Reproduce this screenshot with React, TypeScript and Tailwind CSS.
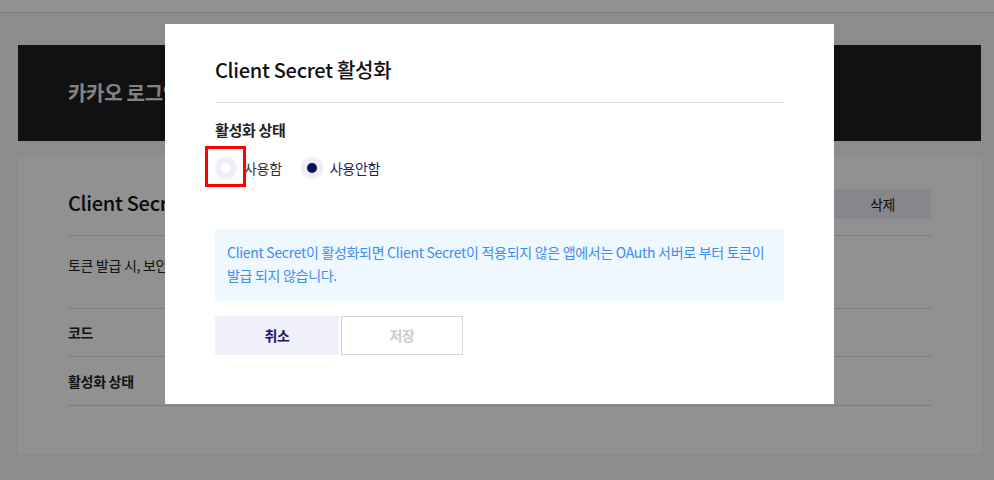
import React from "react";

const font = { fontFamily: '"Noto Sans CJK KR", "Noto Sans", sans-serif' };

function Radio({ checked, label }: { checked: boolean; label: string }) {
  return (
    <label className="flex items-center">
      <span className="flex h-[22px] w-[22px] items-center justify-center rounded-full bg-[#eeeef8]">
        <span className={`h-[10px] w-[10px] rounded-full ${checked ? "bg-[#0b1157]" : "bg-white"}`} />
      </span>
      <span className={`ml-[7px] text-[14px] leading-[22px] ${checked ? "text-[#1f1f5f]" : "text-[#333]"}`}>{label}</span>
    </label>
  );
}

export default function App() {
  return (
    <div style={font} className="relative h-[480px] w-[994px] overflow-hidden bg-[#f7f7f7] tracking-[-0.3px]">
      <div className="h-[13px] border-b border-[#d8d8d8] bg-white" />
      <div className="pl-[18px] pr-[13px] pt-[32px]">
        <div className="flex h-[96px] items-center bg-[#1f1f1f] px-[50px]">
          <span className="text-[20px] font-bold text-[#e6e6e6]">카카오 로그인</span>
        </div>
        <div className="mt-[16px] h-[297px] bg-white px-[50px] pt-[31px]">
          <div className="flex h-[30px] items-center justify-between">
            <span className="text-[20px] font-medium leading-[26px] text-[#111]">Client Secret</span>
            <span className="mt-[2px] flex h-[30px] w-[97px] items-center justify-center bg-[#eeeef5] text-[14px] text-[#111]">삭제</span>
          </div>
          <div className="mt-[17px] border-t border-[#dcdcdc] pb-[33px] pt-[19px]">
            <p className="text-[14px] leading-[20px] text-[#222]">토큰 발급 시, 보안을 강화하기 위해 사용합니다.</p>
          </div>
          <div className="flex h-[48px] items-center border-t border-[#dcdcdc] text-[14px] font-bold text-[#222]">코드</div>
          <div className="flex h-[50px] items-center border-y border-[#dcdcdc] text-[14px] font-bold text-[#222]">활성화 상태</div>
        </div>
      </div>

      <div className="absolute inset-0 bg-black/[0.43]" />

      <div className="absolute left-[165px] top-[24px] h-[380px] w-[669px] bg-white px-[50px]">
        <div className="border-b border-[#dddddd] pb-[18px] pt-[32px]">
          <h2 className="text-[20px] font-medium leading-[28px] text-[#111]">Client Secret 활성화</h2>
        </div>
        <div className="mt-[16px] text-[15px] font-bold leading-[22px] text-[#222]">활성화 상태</div>
        <div className="relative mt-[16px] flex h-[22px] items-center gap-[19px]">
          <Radio checked={false} label="사용함" />
          <Radio checked={true} label="사용안함" />
          <div className="absolute left-[-10px] top-[-11px] h-[41px] w-[41px] border-[3px] border-[#ff0000]" />
        </div>
        <div className="mt-[50px] h-[72px] bg-[#eff7ff] px-[12px] pt-[12px] text-[14px] leading-[23px] text-[#3c8cf5]">
          <div className="whitespace-nowrap">Client Secret이 활성화되면 Client Secret이 적용되지 않은 앱에서는 OAuth 서버로 부터 토큰이</div>
          <div>발급 되지 않습니다.</div>
        </div>
        <div className="mt-[15px] flex gap-[2px]">
          <button className="h-[39px] w-[124px] bg-[#f0f0fa] text-[14px] font-bold text-[#1b1464]">취소</button>
          <button className="h-[39px] w-[122px] border border-[#d6d6d6] bg-white text-[14px] font-bold text-[#cccccc]">저장</button>
        </div>
      </div>
    </div>
  );
}
